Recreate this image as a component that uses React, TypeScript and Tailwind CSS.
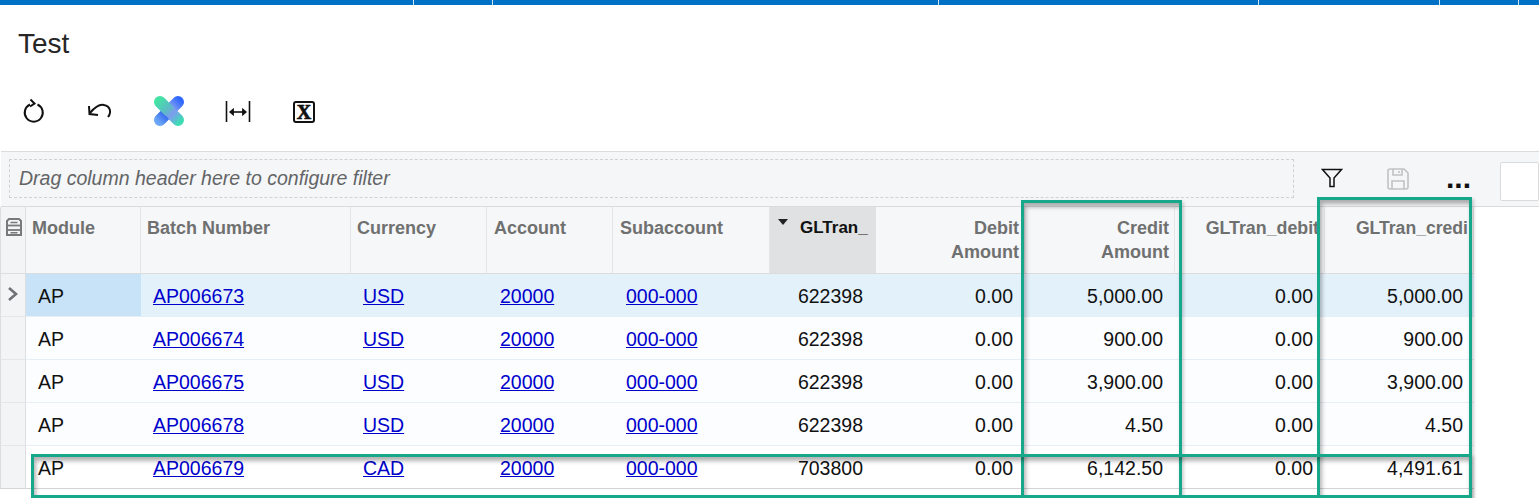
const cols = "grid-cols-[26px_115px_210px_136px_126px_157px_106px_149px_150px_150px_149px]";
const rows = [
  ["AP006673", "USD", "622398", "5,000.00", "5,000.00"],
  ["AP006674", "USD", "622398", "900.00", "900.00"],
  ["AP006675", "USD", "622398", "3,900.00", "3,900.00"],
  ["AP006678", "USD", "622398", "4.50", "4.50"],
  ["AP006679", "CAD", "703800", "6,142.50", "4,491.61"],
];

function Refresh() {
  return (
    <svg width="24" height="26" viewBox="0 0 24 26" fill="none" stroke="#111" strokeWidth="2">
      <path d="M8 7.5A9 9 0 1 0 15.5 7.5" />
      <path d="M8.5 2.5 L12.5 6.5 L8 9.5" />
    </svg>
  );
}
function Undo() {
  return (
    <svg width="26" height="20" viewBox="0 0 26 20" fill="none" stroke="#111" strokeWidth="2">
      <path d="M3 12 C8 6 13 3 17 4 C23 5 25 11 21 16" />
      <path d="M2 5 L2.5 13 L11 14" />
    </svg>
  );
}
function Logo() {
  return (
    <svg width="32" height="32" viewBox="0 0 32 32">
      <defs>
        <linearGradient id="a" gradientUnits="userSpaceOnUse" x1="5" y1="5" x2="27" y2="27">
          <stop offset="0" stopColor="#43e3a4" />
          <stop offset="0.45" stopColor="#5fb8c8" />
          <stop offset="0.65" stopColor="#7d9cf0" />
          <stop offset="1" stopColor="#3fdcb4" />
        </linearGradient>
        <linearGradient id="b" gradientUnits="userSpaceOnUse" x1="5" y1="27" x2="27" y2="5">
          <stop offset="0" stopColor="#6aa6f5" />
          <stop offset="0.3" stopColor="#3b6ff0" />
          <stop offset="0.6" stopColor="#8ca6ee" />
          <stop offset="1" stopColor="#2f68ff" />
        </linearGradient>
      </defs>
      <path d="M7 25L25 7" stroke="url(#b)" strokeWidth="12" strokeLinecap="round" fill="none" />
      <path d="M7 7L16 16" stroke="url(#a)" strokeWidth="12" strokeLinecap="round" fill="none" />
      <path d="M20 20L25 25" stroke="url(#a)" strokeWidth="12" strokeLinecap="round" fill="none" />
    </svg>
  );
}
function Fit() {
  return (
    <svg width="26" height="22" viewBox="0 0 26 22" fill="none" stroke="#111">
      <path d="M1.5 0V21M24.5 0V21" strokeWidth="1.6" />
      <path d="M5 11H21" strokeWidth="1.6" />
      <path d="M8.5 7.5L4.5 11L8.5 14.5ZM17.5 7.5L21.5 11L17.5 14.5Z" fill="#111" strokeWidth="0.8" />
    </svg>
  );
}
function Filter() {
  return (
    <svg width="22" height="20" viewBox="0 0 22 20" fill="none" stroke="#111" strokeWidth="1.5">
      <path d="M1.5 1.5H20.5L13 10V18.5L9 18.5V10Z" />
    </svg>
  );
}
function Save() {
  return (
    <svg width="22" height="22" viewBox="0 0 22 22" fill="none" stroke="#c0c2c4" strokeWidth="1.6">
      <path d="M3 1H17L21 5V19Q21 21 19 21H3Q1 21 1 19V3Q1 1 3 1Z" />
      <path d="M6 1V7H15V1M12 3V5M5 21V13H17V21" />
    </svg>
  );
}
function GutterIcon() {
  return (
    <svg width="16" height="18" viewBox="0 0 16 18" fill="none" stroke="#77797b" strokeWidth="2">
      <path d="M3 1H13L15 3V17H1V3Z" />
      <path d="M1 7.5H15" strokeWidth="1.8" />
      <path d="M1 12H15" strokeWidth="1.8" />
      <path d="M4.5 4.5H11.5M4.5 14.7H11.5" strokeWidth="1.4" />
    </svg>
  );
}

function Head({ children, right, className = "" }: { children: React.ReactNode; right?: boolean; className?: string }) {
  return (
    <div className={`h-[67px] border-r border-b border-r-[#e3e5e7] border-b-[#d9dbdd] bg-[#f6f7f9] pt-[9px] leading-[24px] font-bold text-[#6f7070] ${right ? "text-right pr-[5px] pl-[2px]" : "pl-[6px]"} ${className}`}>
      {children}
    </div>
  );
}

function Box({ className }: { className: string }) {
  return (
    <div className={`absolute border-[3px] border-[#17a78b] shadow-[inset_2px_4px_4px_rgba(0,0,0,0.3),2px_2px_3px_rgba(0,0,0,0.18)] pointer-events-none ${className}`} />
  );
}

export default function App() {
  return (
    <div className="relative w-[1539px] h-[498px] overflow-hidden bg-white font-['Liberation_Sans',Arial,sans-serif]">
      <div className="relative h-[5px] bg-[#0072c6] flex">
        <div className="w-[414px] h-full border-r border-[#cfe6f7]" />
        <div className="w-[79px] h-full border-r border-[#cfe6f7]" />
        <div className="w-[446px] h-full border-r border-[#cfe6f7]" />
        <div className="w-[320px] h-full border-r border-[#cfe6f7]" />
        <div className="w-[181px] h-full border-r border-[#cfe6f7]" />
        <div className="w-[79px] h-full border-r border-[#cfe6f7]" />
      </div>

      <h1 className="pl-[18px] pt-[22px] h-[91px] text-[28px] leading-[34px] text-[#262626]">Test</h1>

      <div className="h-[55px] pl-[22px] flex items-start">
        <div className="w-[24px] h-[28px] mt-[1px]"><Refresh /></div>
        <div className="ml-[41px] mt-[5px] w-[26px]"><Undo /></div>
        <div className="ml-[40px] -mt-[1px] w-[32px]"><Logo /></div>
        <div className="ml-[40px] mt-[5px] w-[26px]"><Fit /></div>
        <div className="ml-[42px] mt-[5px] w-[22px] h-[22px] rounded-[3px] border-2 border-[#111] flex items-center justify-center text-[20px] leading-none font-black font-['Liberation_Serif',serif] text-[#111] [-webkit-text-stroke:0.7px_#111]">X</div>
      </div>

      <div className="relative h-[56px] border-y border-[#d9dbdd] bg-[#f5f6f7] ml-[1px] flex items-start">
        <div className="mt-[7px] ml-[8px] w-[1285px] h-[39px] border border-dashed border-[#cfd1d3] pl-[9px] flex items-center text-[19.5px] italic text-[#626466]">
          Drag column header here to configure filter
        </div>
        <div className="ml-[27px] mt-[16px]"><Filter /></div>
        <div className="ml-[44px] mt-[16px]"><Save /></div>
        <div className="ml-[37px] mt-[11px] w-[24px] text-[30px] font-bold leading-[30px] text-[#111]">...</div>
        <div className="ml-[30px] mt-[10px] flex-1 h-[39px] bg-white border border-[#d9dbdd] rounded-[2px]" />
      </div>

      <div className={`grid ${cols} w-[1475px]`}>
        <div className="h-[67px] bg-[#f3f4f6] border-l border-r border-b border-[#dcdee0] pl-[5px] pt-[11px]"><GutterIcon /></div>
        <HeadRow />
        {rows.map((r, i) => {
          const sel = i === 0;
          const last = i === 4;
          const bg = sel ? "bg-[#e3f1fb]" : "bg-[#fbfdff]";
          const cell = `h-[43px] flex border-b ${last ? "border-[#d2d4d6] items-start pt-[8px] bg-white" : `border-[#e6eff5] items-center pt-[4px] ${bg}`} text-[19.5px] text-[#111]`;
          return (
            <div key={r[0]} className="contents">
              <div className={`h-[43px] bg-[#f3f4f6] border-l border-r border-[#dcdee0] ${last ? "border-b border-b-[#d2d4d6]" : "border-b border-b-[#e4e6e8]"} flex items-center pl-[5px]`}>
                {sel && (
                  <svg width="14" height="16" viewBox="0 0 14 16" fill="none" stroke="#6f7274" strokeWidth="2.6" className="-mt-[3px]">
                    <path d="M3 2L10 8L3 14" />
                  </svg>
                )}
              </div>
              <div className={sel ? "h-[43px] flex items-center border-b border-[#e6eff5] pt-[4px] bg-[#c8e3f8] text-[19.5px] text-[#111] pl-[12px]" : `${cell} pl-[12px]`}>AP</div>
              <div className={`${cell} pl-[12px]`}><a href="#" className="underline text-[#0000cc]">{r[0]}</a></div>
              <div className={`${cell} pl-[12px]`}><a href="#" className="underline text-[#0000cc]">{r[1]}</a></div>
              <div className={`${cell} pl-[13px]`}><a href="#" className="underline text-[#0000cc]">20000</a></div>
              <div className={`${cell} pl-[13px]`}><a href="#" className="underline text-[#0000cc]">000-000</a></div>
              <div className={`${cell} justify-end pr-[13px]`}>{r[2]}</div>
              <div className={`${cell} justify-end pr-[12px]`}>0.00</div>
              <div className={`${cell} justify-end pr-[12px]`}>{r[3]}</div>
              <div className={`${cell} justify-end pr-[12px]`}>0.00</div>
              <div className={`${cell} justify-end pr-[11px]`}>{r[4]}</div>
            </div>
          );
        })}
      </div>

      <Box className="left-[1021px] top-[200px] w-[161px] h-[298px]" />
      <Box className="left-[1317px] top-[197px] w-[155px] h-[301px]" />
      <Box className="left-[31px] top-[454px] w-[1441px] h-[44px]" />
    </div>
  );
}

function HeadRow() {
  return (
    <>
      <Head className="text-[18px]">Module</Head>
      <Head className="text-[18px]">Batch Number</Head>
      <Head className="text-[18px]">Currency</Head>
      <Head className="text-[18px] !pl-[7px]">Account</Head>
      <Head className="text-[18px] !pl-[7px]">Subaccount</Head>
      <div className="relative h-[67px] border-b border-[#d9dbdd] bg-[#dfe1e3] pl-[30px] pr-[6px] pt-[9px] text-[17px] leading-[24px] font-bold text-[#111]">
        <div className="absolute left-[8px] top-[12px] w-0 h-0 border-x-[5px] border-x-transparent border-t-[6px] border-t-[#222]" />
        GLTran_
      </div>
      <Head right className="text-[18px]">Debit<br />Amount</Head>
      <Head right className="text-[18px]">Credit<br />Amount</Head>
      <Head right className="text-[17.8px]">GLTran_debit</Head>
      <Head right className="text-[17.6px]">GLTran_credi</Head>
    </>
  );
}
